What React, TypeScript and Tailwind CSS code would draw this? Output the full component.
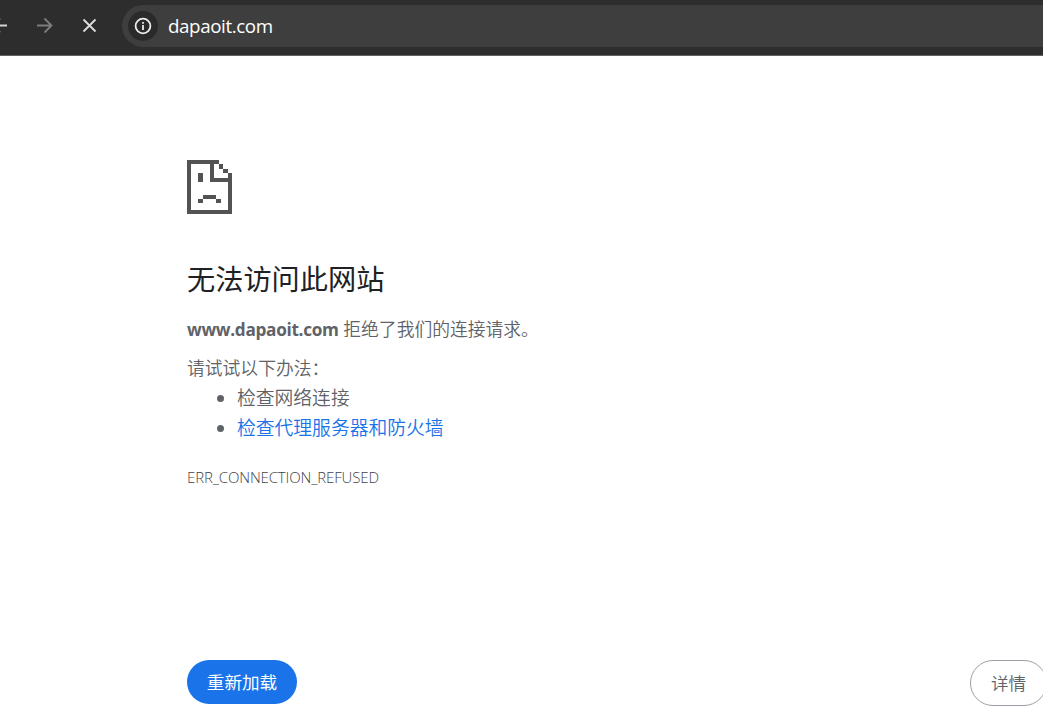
import React from "react";

const suggestions = [
  { text: "检查网络连接", link: false },
  { text: "检查代理服务器和防火墙", link: true },
];

function Toolbar() {
  return (
    <header className="flex h-14 items-start border-b border-[#626262] bg-[#2d2d2d] pt-[5px]">
      <svg className="h-[42px] w-[122px] shrink-0" viewBox="0 0 122 42" fill="none" strokeWidth="1.8">
        <path d="M-7 20.5H7M0 13.5L-7 20.5L0 27.5" stroke="#d4d4d4" />
        <path d="M37 20.5H51M44.5 13.5L51.5 20.5L44.5 27.5" stroke="#7d7d7d" />
        <path d="M83.5 14.5L95.5 26.5M95.5 14.5L83.5 26.5" stroke="#dedede" />
      </svg>
      <div className="flex h-[42px] flex-1 items-center rounded-l-full bg-[#3e3e3e] pl-1.5">
        <span className="flex size-[30px] items-center justify-center rounded-full bg-[#2a2a2a]">
          <svg className="size-[18px]" viewBox="0 0 18 18" fill="none" stroke="#ececec" strokeWidth="1.8">
            <circle cx="9" cy="9" r="7.4" />
            <path d="M9 8V13M9 5V6.8" />
          </svg>
        </span>
        <span className="ml-[10px] text-[18.75px] leading-6 tracking-[-0.4px] text-white">dapaoit.com</span>
      </div>
    </header>
  );
}

function SadPage() {
  return (
    <svg className="h-[54px] w-[45px]" viewBox="0 0 45 54" fill="#535353" shapeRendering="crispEdges">
      {/* page outline with the folded corner */}
      <path d="M0 0H32V4H27V18H41V13H45V54H0ZM4 4V50H41V22H23V4Z" fillRule="evenodd" />
      <path d="M32 4H36V9H32ZM36 9H41V13H36Z" />
      {/* face */}
      <path d="M11 13H16V22H11ZM16 35H29V39H16ZM11 39H16V43H11ZM29 39H34V43H29Z" />
    </svg>
  );
}

export default function App() {
  return (
    <div className="h-[714px] w-full overflow-hidden bg-white font-['Open_Sans','Noto_Sans_CJK_SC',sans-serif] text-[#5f6368]">
      <Toolbar />
      <main className="pl-[187px] pt-[104px]">
        <SadPage />
        <h1 className="mt-[47px] text-[28.2px] leading-[36px] text-[#202124]">无法访问此网站</h1>
        <p className="mt-[18px] h-7 text-[17.8px] font-[350] leading-[28px]">
          <strong className="text-[17.2px] font-bold tracking-[-0.3px]">www.dapaoit.com</strong> 拒绝了我们的连接请求。
        </p>
        <p className="mt-[11px] text-[17.8px] font-[350] leading-[28px]">请试试以下办法：</p>
        <ul className="mt-px text-[18.8px] font-[350] leading-[30px]">
          {suggestions.map((item) => (
            <li key={item.text} className="flex items-center pl-[30px]">
              <span className="mr-[13px] size-[7px] rounded-full bg-[#5f6368]" />
              {item.link ? (
                <a href="#" className="text-[#1a73e8]">{item.text}</a>
              ) : (
                <span>{item.text}</span>
              )}
            </li>
          ))}
        </ul>
        <div className="mt-6 text-[15px] font-[350] leading-[20px] tracking-[-0.14px] text-[#3f4246]">ERR_CONNECTION_REFUSED</div>
        <div className="mt-[173px] flex items-start justify-between">
          <button className="h-11 w-[110px] rounded-full bg-[#1a73e8] text-[17.6px] text-white">重新加载</button>
          <button className="-mr-1 h-[46px] w-[77px] rounded-full border border-[#9aa0a6] text-[17.6px] font-[350]">详情</button>
        </div>
      </main>
    </div>
  );
}
